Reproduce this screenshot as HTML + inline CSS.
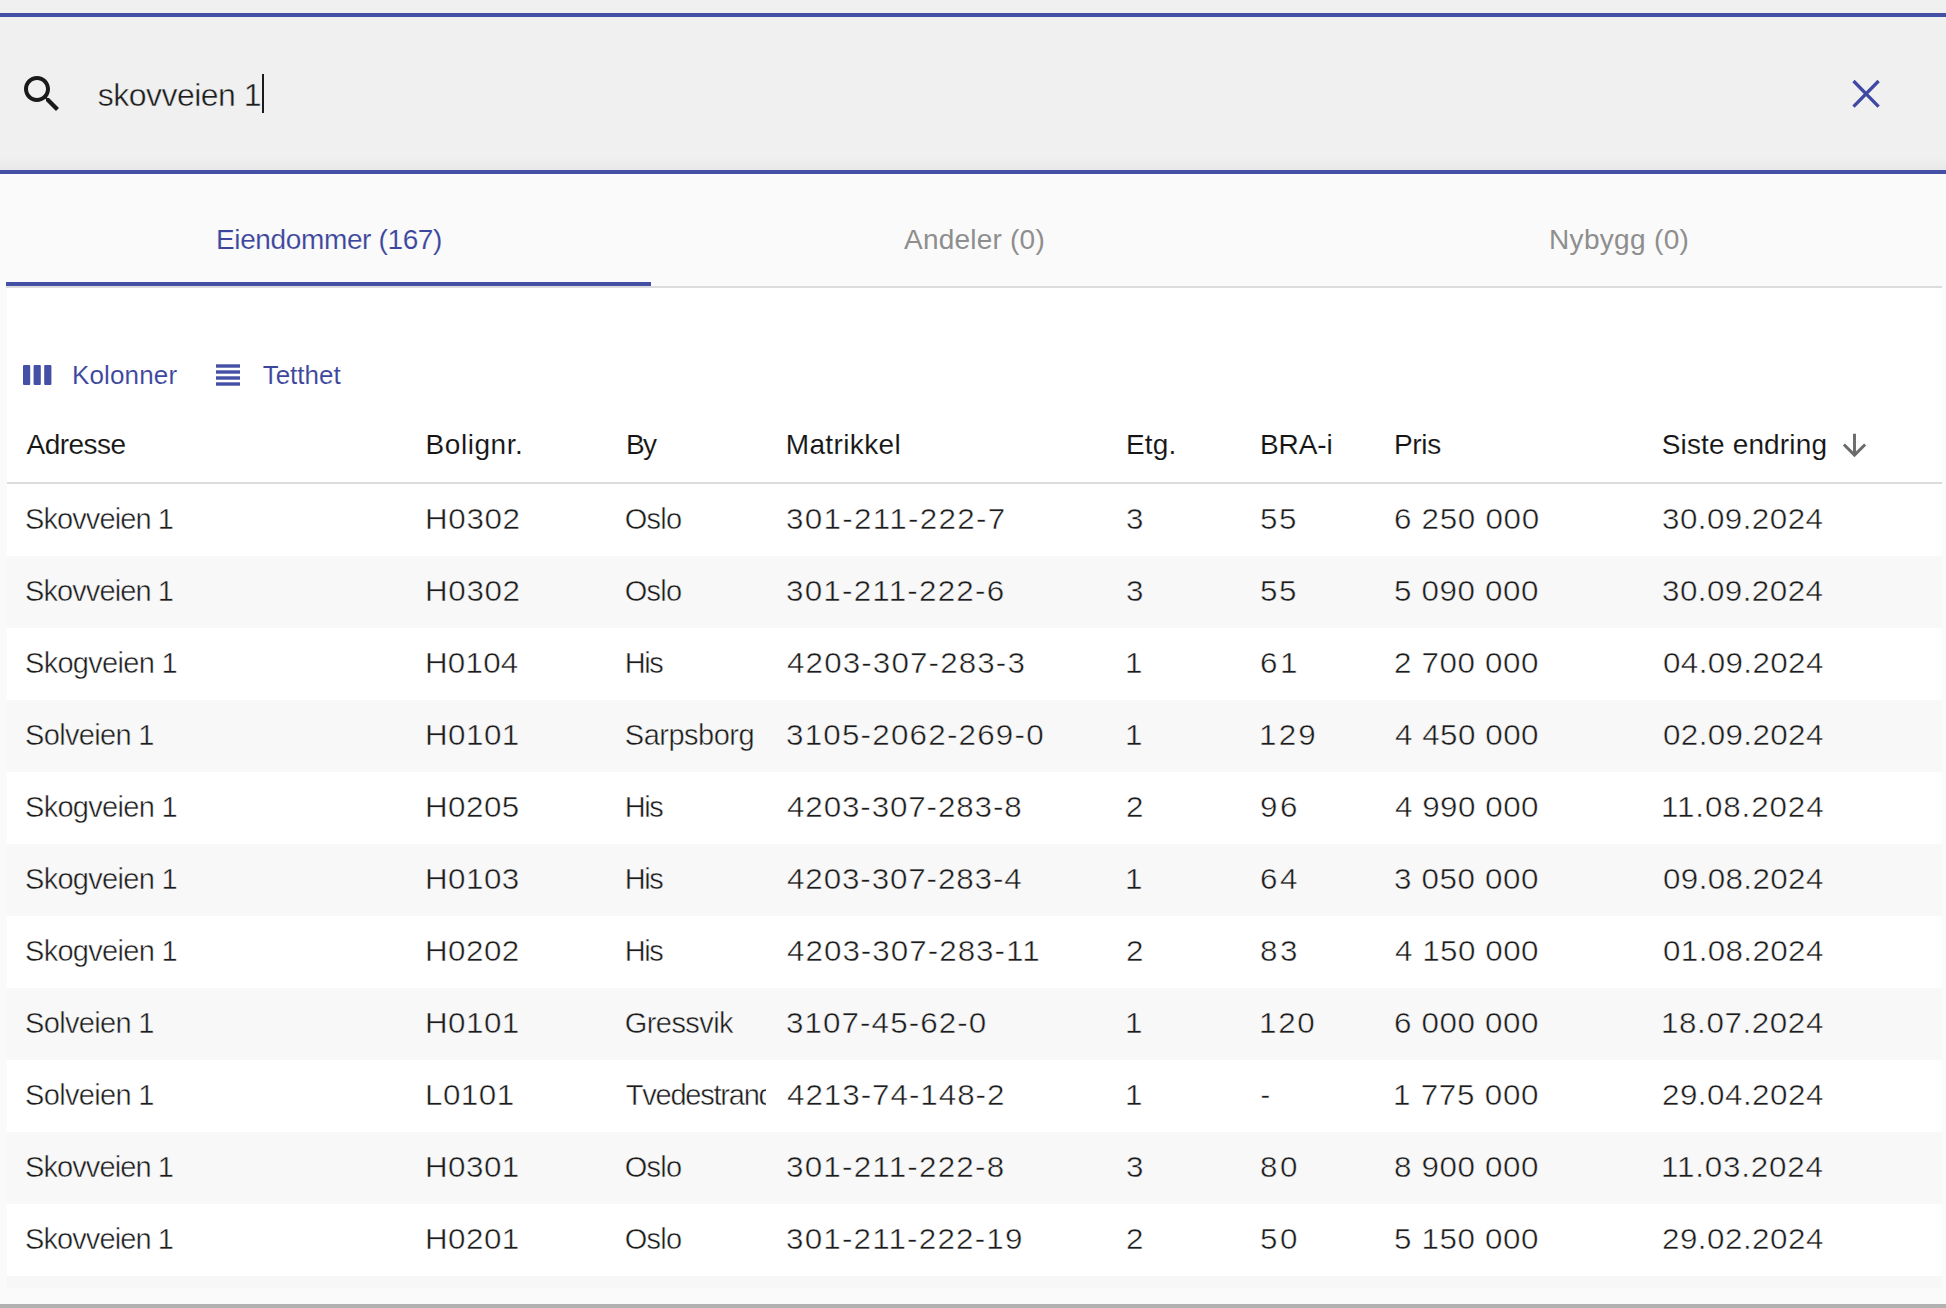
<!DOCTYPE html>
<html><head><meta charset="utf-8"><title>Eiendommer</title>
<style>
html,body{margin:0;padding:0}
body{width:1946px;height:1308px;overflow:hidden;position:relative;background:#fafafa;font-family:"Liberation Sans",sans-serif}
.a{position:absolute}
.t{position:absolute;line-height:1;white-space:pre}
</style></head><body>
<div class="a" style="left:0;top:0;width:1946px;height:13px;background:#f1f0f0"></div>
<div class="a" style="left:0;top:13px;width:1946px;height:4px;background:#4450a6"></div>
<div class="a" style="left:0;top:17px;width:1946px;height:153px;background:linear-gradient(#f0f0f0 0,#f0f0f0 140px,#e8e8ea 153px)"></div>
<div class="a" style="left:0;top:170px;width:1946px;height:4px;background:#4450a6"></div>
<svg class="a" style="left:18px;top:70px" width="48" height="48" viewBox="0 0 24 24"><path fill="#1a1a1a" d="M15.5 14h-.79l-.28-.27C15.41 12.59 16 11.11 16 9.5 16 5.91 13.09 3 9.5 3S3 5.91 3 9.5 5.91 16 9.5 16c1.61 0 3.09-.59 4.23-1.57l.27.28v.79l5 4.99L20.49 19l-4.99-5zm-6 0C7.01 14 5 11.99 5 9.5S7.01 5 9.5 5 14 7.01 14 9.5 11.99 14 9.5 14z"/></svg>
<div class="a" style="left:262px;top:74px;width:2px;height:39px;background:#1a1a1a"></div>
<svg class="a" style="left:1842px;top:70px" width="48" height="48" viewBox="0 0 48 48"><path stroke="#3f49a3" stroke-width="3.3" fill="none" d="M11.5 11L36.6 36.6M36.6 11L11.5 36.6"/></svg>
<div class="a" style="left:6px;top:286px;width:1936px;height:2px;background:#dcdcde"></div>
<div class="a" style="left:6px;top:282px;width:645px;height:4px;background:#4450a6"></div>
<div class="a" style="left:7px;top:288px;width:1935px;height:988px;background:#fff"></div>
<svg class="a" style="left:23px;top:365px" width="29" height="20" viewBox="0 0 29 20"><rect x="0" y="0" width="7.2" height="20" rx="1" fill="#4450a6"/><rect x="10.6" y="0" width="7.2" height="20" rx="1" fill="#4450a6"/><rect x="21.2" y="0" width="7.2" height="20" rx="1" fill="#4450a6"/></svg>
<svg class="a" style="left:216px;top:364px" width="24" height="22" viewBox="0 0 24 22"><rect x="0" y="0.3" width="24" height="3.4" fill="#4450a6"/><rect x="0" y="6.3" width="24" height="3.4" fill="#4450a6"/><rect x="0" y="12.3" width="24" height="3.4" fill="#4450a6"/><rect x="0" y="18.3" width="24" height="3.4" fill="#4450a6"/></svg>
<svg class="a" style="left:1836.6px;top:427.6px" width="35" height="35" viewBox="0 0 24 24"><path fill="#6b6b6b" d="M20 12l-1.41-1.41L13 16.17V4h-2v12.17l-5.58-5.59L4 12l8 8 8-8z"/></svg>
<div class="a" style="left:7px;top:482px;width:1935px;height:2px;background:#dcdcdc"></div>
<div class="a" style="left:7px;top:484px;width:1935px;height:72px;background:#ffffff"></div>
<div class="a" style="left:7px;top:556px;width:1935px;height:72px;background:#f8f8f8"></div>
<div class="a" style="left:7px;top:628px;width:1935px;height:72px;background:#ffffff"></div>
<div class="a" style="left:7px;top:700px;width:1935px;height:72px;background:#f8f8f8"></div>
<div class="a" style="left:7px;top:772px;width:1935px;height:72px;background:#ffffff"></div>
<div class="a" style="left:7px;top:844px;width:1935px;height:72px;background:#f8f8f8"></div>
<div class="a" style="left:7px;top:916px;width:1935px;height:72px;background:#ffffff"></div>
<div class="a" style="left:7px;top:988px;width:1935px;height:72px;background:#f8f8f8"></div>
<div class="a" style="left:7px;top:1060px;width:1935px;height:72px;background:#ffffff"></div>
<div class="a" style="left:7px;top:1132px;width:1935px;height:72px;background:#f8f8f8"></div>
<div class="a" style="left:7px;top:1204px;width:1935px;height:72px;background:#ffffff"></div>
<div class="a" style="left:7px;top:1276px;width:1935px;height:12px;background:#f7f7f7"></div>
<div class="a" style="left:0;top:1304px;width:1946px;height:4px;background:#b2b2b2"></div>
<div class="t" style="left:97.70px;top:78.91px;font-size:32px;color:#1c1c1c;letter-spacing:-0.510px;-webkit-text-stroke:0.45px #f0f0f0;">skovveien 1</div>
<div class="t" style="left:216.00px;top:225.90px;font-size:28px;color:#3c469c;letter-spacing:-0.367px;-webkit-text-stroke:0.15px #fafafa;">Eiendommer (167)</div>
<div class="t" style="left:904.00px;top:225.90px;font-size:28px;color:#8e8e8e;letter-spacing:0.220px;-webkit-text-stroke:0px #fafafa;">Andeler (0)</div>
<div class="t" style="left:1549.00px;top:225.90px;font-size:28px;color:#8e8e8e;letter-spacing:0.333px;-webkit-text-stroke:0px #fafafa;">Nybygg (0)</div>
<div class="t" style="left:71.90px;top:361.69px;font-size:26px;color:#3c469c;letter-spacing:0.157px;-webkit-text-stroke:0.1px #fff;">Kolonner</div>
<div class="t" style="left:262.70px;top:361.69px;font-size:26px;color:#3c469c;letter-spacing:-0.017px;-webkit-text-stroke:0.1px #fff;">Tetthet</div>
<div class="t" style="left:26.50px;top:430.90px;font-size:28px;color:#151515;letter-spacing:-0.517px;-webkit-text-stroke:0.1px #fff;">Adresse</div>
<div class="t" style="left:425.50px;top:430.90px;font-size:28px;color:#151515;letter-spacing:0.571px;-webkit-text-stroke:0.1px #fff;">Bolignr.</div>
<div class="t" style="left:625.90px;top:430.90px;font-size:28px;color:#151515;letter-spacing:-1.600px;-webkit-text-stroke:0.1px #fff;">By</div>
<div class="t" style="left:785.70px;top:430.90px;font-size:28px;color:#151515;letter-spacing:0.375px;-webkit-text-stroke:0.1px #fff;">Matrikkel</div>
<div class="t" style="left:1126.00px;top:430.90px;font-size:28px;color:#151515;letter-spacing:0.133px;-webkit-text-stroke:0.1px #fff;">Etg.</div>
<div class="t" style="left:1260.00px;top:430.90px;font-size:28px;color:#151515;letter-spacing:-0.100px;-webkit-text-stroke:0.1px #fff;">BRA-i</div>
<div class="t" style="left:1394.00px;top:430.90px;font-size:28px;color:#151515;letter-spacing:-0.333px;-webkit-text-stroke:0.1px #fff;">Pris</div>
<div class="t" style="left:1661.70px;top:430.90px;font-size:28px;color:#151515;letter-spacing:0.158px;-webkit-text-stroke:0.1px #fff;">Siste endring</div>
<div class="t" style="left:25.00px;top:505.25px;font-size:29px;color:#1c1c1c;letter-spacing:-0.900px;-webkit-text-stroke:0.45px #ffffff;">Skovveien 1</div>
<div class="t" style="left:424.70px;top:505.25px;font-size:29px;color:#1c1c1c;letter-spacing:0.601px;-webkit-text-stroke:0.45px #ffffff;transform:scaleX(1.0813793103448277);transform-origin:0 0;">H0302</div>
<div class="t" style="left:624.80px;top:505.25px;font-size:29px;color:#1c1c1c;letter-spacing:-0.767px;-webkit-text-stroke:0.45px #ffffff;">Oslo</div>
<div class="t" style="left:786.00px;top:505.25px;font-size:29px;color:#1c1c1c;letter-spacing:1.225px;-webkit-text-stroke:0.45px #ffffff;transform:scaleX(1.0813793103448277);transform-origin:0 0;">301-211-222-7</div>
<div class="t" style="left:1126.00px;top:505.25px;font-size:29px;color:#1c1c1c;letter-spacing:0.000px;-webkit-text-stroke:0.45px #ffffff;transform:scaleX(1.0813793103448277);transform-origin:0 0;">3</div>
<div class="t" style="left:1259.50px;top:505.25px;font-size:29px;color:#1c1c1c;letter-spacing:1.387px;-webkit-text-stroke:0.45px #ffffff;transform:scaleX(1.0813793103448277);transform-origin:0 0;">55</div>
<div class="t" style="left:1393.50px;top:505.25px;font-size:29px;color:#1c1c1c;letter-spacing:0.647px;-webkit-text-stroke:0.45px #ffffff;transform:scaleX(1.0813793103448277);transform-origin:0 0;">6 250 000</div>
<div class="t" style="left:1662.00px;top:505.25px;font-size:29px;color:#1c1c1c;letter-spacing:0.411px;-webkit-text-stroke:0.45px #ffffff;transform:scaleX(1.0813793103448277);transform-origin:0 0;">30.09.2024</div>
<div class="t" style="left:25.00px;top:577.25px;font-size:29px;color:#1c1c1c;letter-spacing:-0.900px;-webkit-text-stroke:0.45px #f8f8f8;">Skovveien 1</div>
<div class="t" style="left:424.70px;top:577.25px;font-size:29px;color:#1c1c1c;letter-spacing:0.601px;-webkit-text-stroke:0.45px #f8f8f8;transform:scaleX(1.0813793103448277);transform-origin:0 0;">H0302</div>
<div class="t" style="left:624.80px;top:577.25px;font-size:29px;color:#1c1c1c;letter-spacing:-0.767px;-webkit-text-stroke:0.45px #f8f8f8;">Oslo</div>
<div class="t" style="left:786.00px;top:577.25px;font-size:29px;color:#1c1c1c;letter-spacing:1.133px;-webkit-text-stroke:0.45px #f8f8f8;transform:scaleX(1.0813793103448277);transform-origin:0 0;">301-211-222-6</div>
<div class="t" style="left:1126.00px;top:577.25px;font-size:29px;color:#1c1c1c;letter-spacing:0.000px;-webkit-text-stroke:0.45px #f8f8f8;transform:scaleX(1.0813793103448277);transform-origin:0 0;">3</div>
<div class="t" style="left:1259.50px;top:577.25px;font-size:29px;color:#1c1c1c;letter-spacing:1.387px;-webkit-text-stroke:0.45px #f8f8f8;transform:scaleX(1.0813793103448277);transform-origin:0 0;">55</div>
<div class="t" style="left:1393.50px;top:577.25px;font-size:29px;color:#1c1c1c;letter-spacing:0.578px;-webkit-text-stroke:0.45px #f8f8f8;transform:scaleX(1.0813793103448277);transform-origin:0 0;">5 090 000</div>
<div class="t" style="left:1662.00px;top:577.25px;font-size:29px;color:#1c1c1c;letter-spacing:0.411px;-webkit-text-stroke:0.45px #f8f8f8;transform:scaleX(1.0813793103448277);transform-origin:0 0;">30.09.2024</div>
<div class="t" style="left:25.00px;top:649.25px;font-size:29px;color:#1c1c1c;letter-spacing:-0.700px;-webkit-text-stroke:0.45px #ffffff;">Skogveien 1</div>
<div class="t" style="left:424.70px;top:649.25px;font-size:29px;color:#1c1c1c;letter-spacing:0.192px;-webkit-text-stroke:0.45px #ffffff;transform:scaleX(1.0813793103448277);transform-origin:0 0;">H0104</div>
<div class="t" style="left:624.80px;top:649.25px;font-size:29px;color:#1c1c1c;letter-spacing:-1.500px;-webkit-text-stroke:0.45px #ffffff;">His</div>
<div class="t" style="left:787.00px;top:649.25px;font-size:29px;color:#1c1c1c;letter-spacing:1.046px;-webkit-text-stroke:0.45px #ffffff;transform:scaleX(1.0813793103448277);transform-origin:0 0;">4203-307-283-3</div>
<div class="t" style="left:1125.00px;top:649.25px;font-size:29px;color:#1c1c1c;letter-spacing:0.000px;-webkit-text-stroke:0.45px #ffffff;transform:scaleX(1.0813793103448277);transform-origin:0 0;">1</div>
<div class="t" style="left:1259.50px;top:649.25px;font-size:29px;color:#1c1c1c;letter-spacing:2.404px;-webkit-text-stroke:0.45px #ffffff;transform:scaleX(1.0813793103448277);transform-origin:0 0;">61</div>
<div class="t" style="left:1393.50px;top:649.25px;font-size:29px;color:#1c1c1c;letter-spacing:0.578px;-webkit-text-stroke:0.45px #ffffff;transform:scaleX(1.0813793103448277);transform-origin:0 0;">2 700 000</div>
<div class="t" style="left:1663.00px;top:649.25px;font-size:29px;color:#1c1c1c;letter-spacing:0.349px;-webkit-text-stroke:0.45px #ffffff;transform:scaleX(1.0813793103448277);transform-origin:0 0;">04.09.2024</div>
<div class="t" style="left:25.00px;top:721.25px;font-size:29px;color:#1c1c1c;letter-spacing:-0.667px;-webkit-text-stroke:0.45px #f8f8f8;">Solveien 1</div>
<div class="t" style="left:424.70px;top:721.25px;font-size:29px;color:#1c1c1c;letter-spacing:0.423px;-webkit-text-stroke:0.45px #f8f8f8;transform:scaleX(1.0813793103448277);transform-origin:0 0;">H0101</div>
<div class="t" style="left:624.80px;top:721.25px;font-size:29px;color:#1c1c1c;letter-spacing:-0.500px;-webkit-text-stroke:0.45px #f8f8f8;">Sarpsborg</div>
<div class="t" style="left:786.00px;top:721.25px;font-size:29px;color:#1c1c1c;letter-spacing:1.123px;-webkit-text-stroke:0.45px #f8f8f8;transform:scaleX(1.0813793103448277);transform-origin:0 0;">3105-2062-269-0</div>
<div class="t" style="left:1125.00px;top:721.25px;font-size:29px;color:#1c1c1c;letter-spacing:0.000px;-webkit-text-stroke:0.45px #f8f8f8;transform:scaleX(1.0813793103448277);transform-origin:0 0;">1</div>
<div class="t" style="left:1258.50px;top:721.25px;font-size:29px;color:#1c1c1c;letter-spacing:2.034px;-webkit-text-stroke:0.45px #f8f8f8;transform:scaleX(1.0813793103448277);transform-origin:0 0;">129</div>
<div class="t" style="left:1394.50px;top:721.25px;font-size:29px;color:#1c1c1c;letter-spacing:0.462px;-webkit-text-stroke:0.45px #f8f8f8;transform:scaleX(1.0813793103448277);transform-origin:0 0;">4 450 000</div>
<div class="t" style="left:1663.00px;top:721.25px;font-size:29px;color:#1c1c1c;letter-spacing:0.349px;-webkit-text-stroke:0.45px #f8f8f8;transform:scaleX(1.0813793103448277);transform-origin:0 0;">02.09.2024</div>
<div class="t" style="left:25.00px;top:793.25px;font-size:29px;color:#1c1c1c;letter-spacing:-0.700px;-webkit-text-stroke:0.45px #ffffff;">Skogveien 1</div>
<div class="t" style="left:424.70px;top:793.25px;font-size:29px;color:#1c1c1c;letter-spacing:0.423px;-webkit-text-stroke:0.45px #ffffff;transform:scaleX(1.0813793103448277);transform-origin:0 0;">H0205</div>
<div class="t" style="left:624.80px;top:793.25px;font-size:29px;color:#1c1c1c;letter-spacing:-1.500px;-webkit-text-stroke:0.45px #ffffff;">His</div>
<div class="t" style="left:787.00px;top:793.25px;font-size:29px;color:#1c1c1c;letter-spacing:0.818px;-webkit-text-stroke:0.45px #ffffff;transform:scaleX(1.0813793103448277);transform-origin:0 0;">4203-307-283-8</div>
<div class="t" style="left:1126.00px;top:793.25px;font-size:29px;color:#1c1c1c;letter-spacing:0.000px;-webkit-text-stroke:0.45px #ffffff;transform:scaleX(1.0813793103448277);transform-origin:0 0;">2</div>
<div class="t" style="left:1259.50px;top:793.25px;font-size:29px;color:#1c1c1c;letter-spacing:2.404px;-webkit-text-stroke:0.45px #ffffff;transform:scaleX(1.0813793103448277);transform-origin:0 0;">96</div>
<div class="t" style="left:1394.50px;top:793.25px;font-size:29px;color:#1c1c1c;letter-spacing:0.462px;-webkit-text-stroke:0.45px #ffffff;transform:scaleX(1.0813793103448277);transform-origin:0 0;">4 990 000</div>
<div class="t" style="left:1661.00px;top:793.25px;font-size:29px;color:#1c1c1c;letter-spacing:0.822px;-webkit-text-stroke:0.45px #ffffff;transform:scaleX(1.0813793103448277);transform-origin:0 0;">11.08.2024</div>
<div class="t" style="left:25.00px;top:865.25px;font-size:29px;color:#1c1c1c;letter-spacing:-0.700px;-webkit-text-stroke:0.45px #f8f8f8;">Skogveien 1</div>
<div class="t" style="left:424.70px;top:865.25px;font-size:29px;color:#1c1c1c;letter-spacing:0.423px;-webkit-text-stroke:0.45px #f8f8f8;transform:scaleX(1.0813793103448277);transform-origin:0 0;">H0103</div>
<div class="t" style="left:624.80px;top:865.25px;font-size:29px;color:#1c1c1c;letter-spacing:-1.500px;-webkit-text-stroke:0.45px #f8f8f8;">His</div>
<div class="t" style="left:787.00px;top:865.25px;font-size:29px;color:#1c1c1c;letter-spacing:0.818px;-webkit-text-stroke:0.45px #f8f8f8;transform:scaleX(1.0813793103448277);transform-origin:0 0;">4203-307-283-4</div>
<div class="t" style="left:1125.00px;top:865.25px;font-size:29px;color:#1c1c1c;letter-spacing:0.000px;-webkit-text-stroke:0.45px #f8f8f8;transform:scaleX(1.0813793103448277);transform-origin:0 0;">1</div>
<div class="t" style="left:1259.50px;top:865.25px;font-size:29px;color:#1c1c1c;letter-spacing:2.404px;-webkit-text-stroke:0.45px #f8f8f8;transform:scaleX(1.0813793103448277);transform-origin:0 0;">64</div>
<div class="t" style="left:1393.50px;top:865.25px;font-size:29px;color:#1c1c1c;letter-spacing:0.578px;-webkit-text-stroke:0.45px #f8f8f8;transform:scaleX(1.0813793103448277);transform-origin:0 0;">3 050 000</div>
<div class="t" style="left:1663.00px;top:865.25px;font-size:29px;color:#1c1c1c;letter-spacing:0.349px;-webkit-text-stroke:0.45px #f8f8f8;transform:scaleX(1.0813793103448277);transform-origin:0 0;">09.08.2024</div>
<div class="t" style="left:25.00px;top:937.25px;font-size:29px;color:#1c1c1c;letter-spacing:-0.700px;-webkit-text-stroke:0.45px #ffffff;">Skogveien 1</div>
<div class="t" style="left:424.70px;top:937.25px;font-size:29px;color:#1c1c1c;letter-spacing:0.423px;-webkit-text-stroke:0.45px #ffffff;transform:scaleX(1.0813793103448277);transform-origin:0 0;">H0202</div>
<div class="t" style="left:624.80px;top:937.25px;font-size:29px;color:#1c1c1c;letter-spacing:-1.500px;-webkit-text-stroke:0.45px #ffffff;">His</div>
<div class="t" style="left:787.00px;top:937.25px;font-size:29px;color:#1c1c1c;letter-spacing:0.945px;-webkit-text-stroke:0.45px #ffffff;transform:scaleX(1.0813793103448277);transform-origin:0 0;">4203-307-283-11</div>
<div class="t" style="left:1126.00px;top:937.25px;font-size:29px;color:#1c1c1c;letter-spacing:0.000px;-webkit-text-stroke:0.45px #ffffff;transform:scaleX(1.0813793103448277);transform-origin:0 0;">2</div>
<div class="t" style="left:1259.50px;top:937.25px;font-size:29px;color:#1c1c1c;letter-spacing:2.404px;-webkit-text-stroke:0.45px #ffffff;transform:scaleX(1.0813793103448277);transform-origin:0 0;">83</div>
<div class="t" style="left:1394.50px;top:937.25px;font-size:29px;color:#1c1c1c;letter-spacing:0.462px;-webkit-text-stroke:0.45px #ffffff;transform:scaleX(1.0813793103448277);transform-origin:0 0;">4 150 000</div>
<div class="t" style="left:1663.00px;top:937.25px;font-size:29px;color:#1c1c1c;letter-spacing:0.349px;-webkit-text-stroke:0.45px #ffffff;transform:scaleX(1.0813793103448277);transform-origin:0 0;">01.08.2024</div>
<div class="t" style="left:25.00px;top:1009.25px;font-size:29px;color:#1c1c1c;letter-spacing:-0.667px;-webkit-text-stroke:0.45px #f8f8f8;">Solveien 1</div>
<div class="t" style="left:424.70px;top:1009.25px;font-size:29px;color:#1c1c1c;letter-spacing:0.423px;-webkit-text-stroke:0.45px #f8f8f8;transform:scaleX(1.0813793103448277);transform-origin:0 0;">H0101</div>
<div class="t" style="left:624.80px;top:1009.25px;font-size:29px;color:#1c1c1c;letter-spacing:-0.569px;-webkit-text-stroke:0.45px #f8f8f8;">Gressvik</div>
<div class="t" style="left:786.00px;top:1009.25px;font-size:29px;color:#1c1c1c;letter-spacing:1.000px;-webkit-text-stroke:0.45px #f8f8f8;transform:scaleX(1.0813793103448277);transform-origin:0 0;">3107-45-62-0</div>
<div class="t" style="left:1125.00px;top:1009.25px;font-size:29px;color:#1c1c1c;letter-spacing:0.000px;-webkit-text-stroke:0.45px #f8f8f8;transform:scaleX(1.0813793103448277);transform-origin:0 0;">1</div>
<div class="t" style="left:1258.50px;top:1009.25px;font-size:29px;color:#1c1c1c;letter-spacing:1.572px;-webkit-text-stroke:0.45px #f8f8f8;transform:scaleX(1.0813793103448277);transform-origin:0 0;">120</div>
<div class="t" style="left:1393.50px;top:1009.25px;font-size:29px;color:#1c1c1c;letter-spacing:0.578px;-webkit-text-stroke:0.45px #f8f8f8;transform:scaleX(1.0813793103448277);transform-origin:0 0;">6 000 000</div>
<div class="t" style="left:1661.00px;top:1009.25px;font-size:29px;color:#1c1c1c;letter-spacing:0.555px;-webkit-text-stroke:0.45px #f8f8f8;transform:scaleX(1.0813793103448277);transform-origin:0 0;">18.07.2024</div>
<div class="t" style="left:25.00px;top:1081.25px;font-size:29px;color:#1c1c1c;letter-spacing:-0.667px;-webkit-text-stroke:0.45px #ffffff;">Solveien 1</div>
<div class="t" style="left:424.70px;top:1081.25px;font-size:29px;color:#1c1c1c;letter-spacing:0.437px;-webkit-text-stroke:0.45px #ffffff;transform:scaleX(1.0813793103448277);transform-origin:0 0;">L0101</div>
<div class="t" style="left:625.80px;top:1081.25px;font-size:29px;color:#1c1c1c;letter-spacing:-1.233px;-webkit-text-stroke:0.45px #ffffff;width:140.20px;overflow:hidden;">Tvedestrand</div>
<div class="t" style="left:787.00px;top:1081.25px;font-size:29px;color:#1c1c1c;letter-spacing:0.902px;-webkit-text-stroke:0.45px #ffffff;transform:scaleX(1.0813793103448277);transform-origin:0 0;">4213-74-148-2</div>
<div class="t" style="left:1125.00px;top:1081.25px;font-size:29px;color:#1c1c1c;letter-spacing:0.000px;-webkit-text-stroke:0.45px #ffffff;transform:scaleX(1.0813793103448277);transform-origin:0 0;">1</div>
<div class="t" style="left:1260.50px;top:1081.25px;font-size:29px;color:#1c1c1c;letter-spacing:0.000px;-webkit-text-stroke:0.45px #ffffff;">-</div>
<div class="t" style="left:1392.50px;top:1081.25px;font-size:29px;color:#1c1c1c;letter-spacing:0.694px;-webkit-text-stroke:0.45px #ffffff;transform:scaleX(1.0813793103448277);transform-origin:0 0;">1 775 000</div>
<div class="t" style="left:1662.00px;top:1081.25px;font-size:29px;color:#1c1c1c;letter-spacing:0.452px;-webkit-text-stroke:0.45px #ffffff;transform:scaleX(1.0813793103448277);transform-origin:0 0;">29.04.2024</div>
<div class="t" style="left:25.00px;top:1153.25px;font-size:29px;color:#1c1c1c;letter-spacing:-0.900px;-webkit-text-stroke:0.45px #f8f8f8;">Skovveien 1</div>
<div class="t" style="left:424.70px;top:1153.25px;font-size:29px;color:#1c1c1c;letter-spacing:0.423px;-webkit-text-stroke:0.45px #f8f8f8;transform:scaleX(1.0813793103448277);transform-origin:0 0;">H0301</div>
<div class="t" style="left:624.80px;top:1153.25px;font-size:29px;color:#1c1c1c;letter-spacing:-0.767px;-webkit-text-stroke:0.45px #f8f8f8;">Oslo</div>
<div class="t" style="left:786.00px;top:1153.25px;font-size:29px;color:#1c1c1c;letter-spacing:1.133px;-webkit-text-stroke:0.45px #f8f8f8;transform:scaleX(1.0813793103448277);transform-origin:0 0;">301-211-222-8</div>
<div class="t" style="left:1126.00px;top:1153.25px;font-size:29px;color:#1c1c1c;letter-spacing:0.000px;-webkit-text-stroke:0.45px #f8f8f8;transform:scaleX(1.0813793103448277);transform-origin:0 0;">3</div>
<div class="t" style="left:1259.50px;top:1153.25px;font-size:29px;color:#1c1c1c;letter-spacing:2.404px;-webkit-text-stroke:0.45px #f8f8f8;transform:scaleX(1.0813793103448277);transform-origin:0 0;">80</div>
<div class="t" style="left:1393.50px;top:1153.25px;font-size:29px;color:#1c1c1c;letter-spacing:0.578px;-webkit-text-stroke:0.45px #f8f8f8;transform:scaleX(1.0813793103448277);transform-origin:0 0;">8 900 000</div>
<div class="t" style="left:1661.00px;top:1153.25px;font-size:29px;color:#1c1c1c;letter-spacing:0.760px;-webkit-text-stroke:0.45px #f8f8f8;transform:scaleX(1.0813793103448277);transform-origin:0 0;">11.03.2024</div>
<div class="t" style="left:25.00px;top:1225.25px;font-size:29px;color:#1c1c1c;letter-spacing:-0.900px;-webkit-text-stroke:0.45px #ffffff;">Skovveien 1</div>
<div class="t" style="left:424.70px;top:1225.25px;font-size:29px;color:#1c1c1c;letter-spacing:0.423px;-webkit-text-stroke:0.45px #ffffff;transform:scaleX(1.0813793103448277);transform-origin:0 0;">H0201</div>
<div class="t" style="left:624.80px;top:1225.25px;font-size:29px;color:#1c1c1c;letter-spacing:-0.767px;-webkit-text-stroke:0.45px #ffffff;">Oslo</div>
<div class="t" style="left:786.00px;top:1225.25px;font-size:29px;color:#1c1c1c;letter-spacing:1.103px;-webkit-text-stroke:0.45px #ffffff;transform:scaleX(1.0813793103448277);transform-origin:0 0;">301-211-222-19</div>
<div class="t" style="left:1126.00px;top:1225.25px;font-size:29px;color:#1c1c1c;letter-spacing:0.000px;-webkit-text-stroke:0.45px #ffffff;transform:scaleX(1.0813793103448277);transform-origin:0 0;">2</div>
<div class="t" style="left:1259.50px;top:1225.25px;font-size:29px;color:#1c1c1c;letter-spacing:2.404px;-webkit-text-stroke:0.45px #ffffff;transform:scaleX(1.0813793103448277);transform-origin:0 0;">50</div>
<div class="t" style="left:1393.50px;top:1225.25px;font-size:29px;color:#1c1c1c;letter-spacing:0.578px;-webkit-text-stroke:0.45px #ffffff;transform:scaleX(1.0813793103448277);transform-origin:0 0;">5 150 000</div>
<div class="t" style="left:1662.00px;top:1225.25px;font-size:29px;color:#1c1c1c;letter-spacing:0.452px;-webkit-text-stroke:0.45px #ffffff;transform:scaleX(1.0813793103448277);transform-origin:0 0;">29.02.2024</div>
</body></html>
